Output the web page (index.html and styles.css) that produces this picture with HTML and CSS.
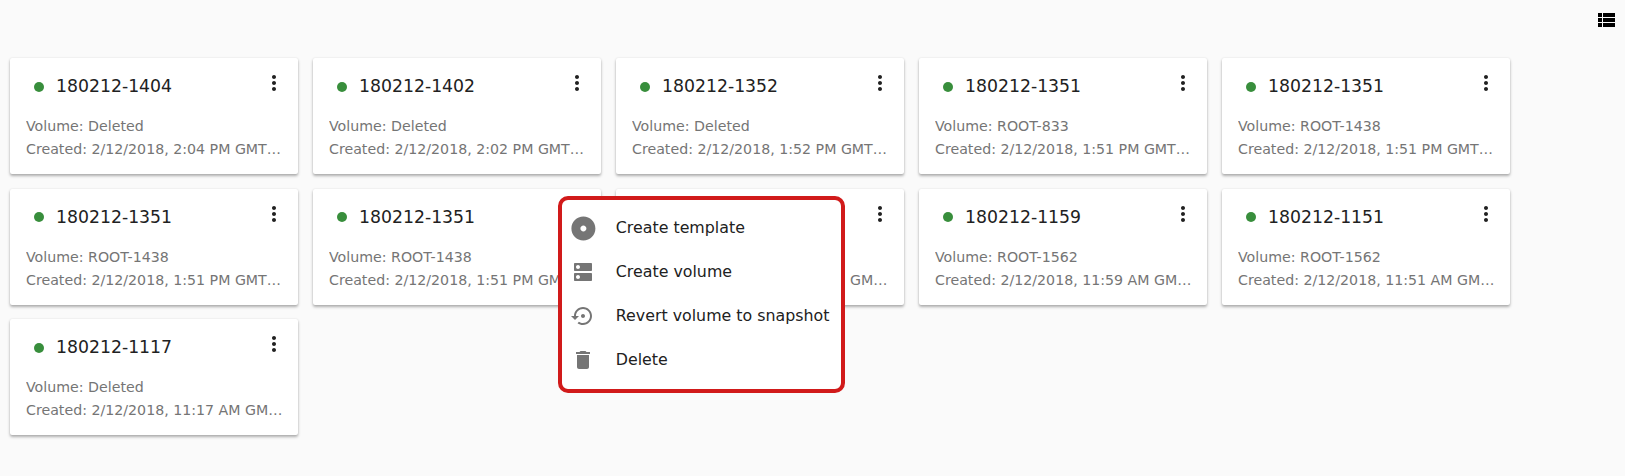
FILE: index.html
```html
<!DOCTYPE html>
<html lang="en">
<head>
    <meta charset="UTF-8">
    <title>Snapshots</title>
    <link rel="stylesheet" href="styles.css">
</head>
<body>
    <svg width="0" height="0" class="defs">
        <symbol id="icon-more" viewBox="0 0 24 24"><path d="M12 8c1.100 0 2-.9 2-2s-.9-2-2-2-2 .9-2 2 .9 2 2 2zm0 2c-1.100 0-2 .9-2 2s.9 2 2 2 2-.9 2-2-.9-2-2-2zm0 6c-1.100 0-2 .9-2 2s.9 2 2 2 2-.9 2-2-.9-2-2-2z"/></symbol>
    </svg>

    <div class="toolbar">
        <svg class="view-icon" viewBox="0 0 24 24"><path d="M4 14h4v-4H4v4zm0 5h4v-4H4v4zM4 9h4V5H4v4zm5 5h12v-4H9v4zm0 5h12v-4H9v4zM9 5v4h12V5H9z"/></svg>
    </div>

    <div class="grid">
        <div class="card">
            <div class="card-head"><span class="dot"></span><span class="title">180212-1404</span><svg class="more"><use href="#icon-more"/></svg></div>
            <div class="line">Volume: Deleted</div>
            <div class="line">Created: 2/12/2018, 2:04 PM GMT+7</div>
        </div>
        <div class="card">
            <div class="card-head"><span class="dot"></span><span class="title">180212-1402</span><svg class="more"><use href="#icon-more"/></svg></div>
            <div class="line">Volume: Deleted</div>
            <div class="line">Created: 2/12/2018, 2:02 PM GMT+7</div>
        </div>
        <div class="card">
            <div class="card-head"><span class="dot"></span><span class="title">180212-1352</span><svg class="more"><use href="#icon-more"/></svg></div>
            <div class="line">Volume: Deleted</div>
            <div class="line">Created: 2/12/2018, 1:52 PM GMT+7</div>
        </div>
        <div class="card">
            <div class="card-head"><span class="dot"></span><span class="title">180212-1351</span><svg class="more"><use href="#icon-more"/></svg></div>
            <div class="line">Volume: ROOT-833</div>
            <div class="line">Created: 2/12/2018, 1:51 PM GMT+7</div>
        </div>
        <div class="card">
            <div class="card-head"><span class="dot"></span><span class="title">180212-1351</span><svg class="more"><use href="#icon-more"/></svg></div>
            <div class="line">Volume: ROOT-1438</div>
            <div class="line">Created: 2/12/2018, 1:51 PM GMT+7</div>
        </div>
        <div class="card">
            <div class="card-head"><span class="dot"></span><span class="title">180212-1351</span><svg class="more"><use href="#icon-more"/></svg></div>
            <div class="line">Volume: ROOT-1438</div>
            <div class="line">Created: 2/12/2018, 1:51 PM GMT+7</div>
        </div>
        <div class="card">
            <div class="card-head"><span class="dot"></span><span class="title">180212-1351</span><svg class="more"><use href="#icon-more"/></svg></div>
            <div class="line">Volume: ROOT-1438</div>
            <div class="line">Created: 2/12/2018, 1:51 PM GMT+7</div>
        </div>
        <div class="card">
            <div class="card-head"><span class="dot"></span><span class="title">180212-1200</span><svg class="more"><use href="#icon-more"/></svg></div>
            <div class="line">Volume: ROOT-1562</div>
            <div class="line">Created: 2/12/2018, 12:00 PM GMT+7</div>
        </div>
        <div class="card">
            <div class="card-head"><span class="dot"></span><span class="title">180212-1159</span><svg class="more"><use href="#icon-more"/></svg></div>
            <div class="line">Volume: ROOT-1562</div>
            <div class="line">Created: 2/12/2018, 11:59 AM GMT+7</div>
        </div>
        <div class="card">
            <div class="card-head"><span class="dot"></span><span class="title">180212-1151</span><svg class="more"><use href="#icon-more"/></svg></div>
            <div class="line">Volume: ROOT-1562</div>
            <div class="line">Created: 2/12/2018, 11:51 AM GMT+7</div>
        </div>
        <div class="card">
            <div class="card-head"><span class="dot"></span><span class="title">180212-1117</span><svg class="more"><use href="#icon-more"/></svg></div>
            <div class="line">Volume: Deleted</div>
            <div class="line">Created: 2/12/2018, 11:17 AM GMT+7</div>
        </div>
    </div>

    <!-- popup menu, sits over the cards -->
    <div class="menu">
        <div class="menu-item">
            <svg class="menu-icon menu-icon-big" viewBox="0 0 24 24"><path d="M12 2C6.480 2 2 6.480 2 12s4.480 10 10 10 10-4.480 10-10S17.520 2 12 2zm0 12.500c-1.380 0-2.500-1.120-2.500-2.500s1.120-2.500 2.500-2.500 2.500 1.120 2.500 2.500-1.120 2.500-2.500 2.500z"/></svg>
            <span>Create template</span>
        </div>
        <div class="menu-item">
            <svg class="menu-icon" viewBox="0 0 24 24"><path d="M20 13H4c-.55 0-1 .45-1 1v6c0 .55.45 1 1 1h16c.55 0 1-.45 1-1v-6c0-.55-.45-1-1-1zM7 19c-1.100 0-2-.9-2-2s.9-2 2-2 2 .9 2 2-.9 2-2 2zM20 3H4c-.55 0-1 .45-1 1v6c0 .55.45 1 1 1h16c.55 0 1-.45 1-1V4c0-.55-.45-1-1-1zM7 9c-1.100 0-2-.9-2-2s.9-2 2-2 2 .9 2 2-.9 2-2 2z"/></svg>
            <span>Create volume</span>
        </div>
        <div class="menu-item">
            <svg class="menu-icon" viewBox="0 0 24 24"><path d="M14 12c0-1.100-.9-2-2-2s-2 .9-2 2 .9 2 2 2 2-.9 2-2zm-2-9c-4.970 0-9 4.030-9 9H0l4 4 4-4H5c0-3.870 3.130-7 7-7s7 3.130 7 7-3.130 7-7 7c-1.510 0-2.910-.49-4.060-1.300l-1.420 1.440C8.040 20.300 9.940 21 12 21c4.970 0 9-4.030 9-9s-4.030-9-9-9z"/></svg>
            <span>Revert volume to snapshot</span>
        </div>
        <div class="menu-item">
            <svg class="menu-icon" viewBox="0 0 24 24"><path d="M6 19c0 1.100.9 2 2 2h8c1.100 0 2-.9 2-2V7H6v12zM19 4h-3.500l-1-1h-5l-1 1H5v2h14V4z"/></svg>
            <span>Delete</span>
        </div>
    </div>
</body>
</html>
```

FILE: styles.css
```css
body {
    margin: 0;
    background-color: #fafafa;
    font-family: "DejaVu Sans", sans-serif;
    color: #212121;
}
.defs {
    display: none;
}
.toolbar {
    height: 58px;
    padding: 8px 7px 0 0;
    box-sizing: border-box;
    display: flex;
    justify-content: flex-end;
}
.view-icon {
    width: 24px;
    height: 24px;
    fill: #000;
}
.grid {
    display: grid;
    grid-template-columns: repeat(5, 288px);
    column-gap: 15px;
    row-gap: 14.5px;
    padding: 0 0 24px 10px;
}
.card {
    height: 116px;
    padding: 0 12px 0 16px;
    box-sizing: border-box;
    background: #fff;
    border-radius: 2px;
    box-shadow: 0 2px 3px rgba(0, 0, 0, .3), 0 0 2px rgba(0, 0, 0, .1);
    font-size: 14.2px;
    color: #757575;
}
.card-head {
    display: flex;
    align-items: center;
    height: 57px;
    padding-left: 8px;
    color: #212121;
}
.dot {
    width: 10px;
    height: 10px;
    border-radius: 50%;
    background: #388e3c;
    margin-right: 12px;
}
.title {
    flex: 1;
    font-size: 17.28px;
    line-height: 57px;
}
.more {
    width: 24px;
    height: 24px;
    fill: #212121;
    margin: -7px 0 0 0;
}
.line {
    height: 23px;
    line-height: 23px;
    white-space: nowrap;
    overflow: hidden;
    text-overflow: ellipsis;
}
.menu {
    position: absolute;
    left: 558px;
    top: 196px;
    width: 287px;
    height: 197px;
    box-sizing: border-box;
    padding: 5px 0;
    background: #fff;
    border: 4px solid #d11a1a;
    border-radius: 10px;
}
.menu-item {
    display: flex;
    align-items: center;
    height: 44px;
    font-size: 15.84px;
}
.menu-icon {
    width: 24px;
    height: 24px;
    fill: #757575;
    margin: 2px 20.4px 0 9.4px;
}
.menu-icon-big {
    width: 28.8px;
    height: 28.8px;
    margin: 2px 18px 0 7px;
}
```
